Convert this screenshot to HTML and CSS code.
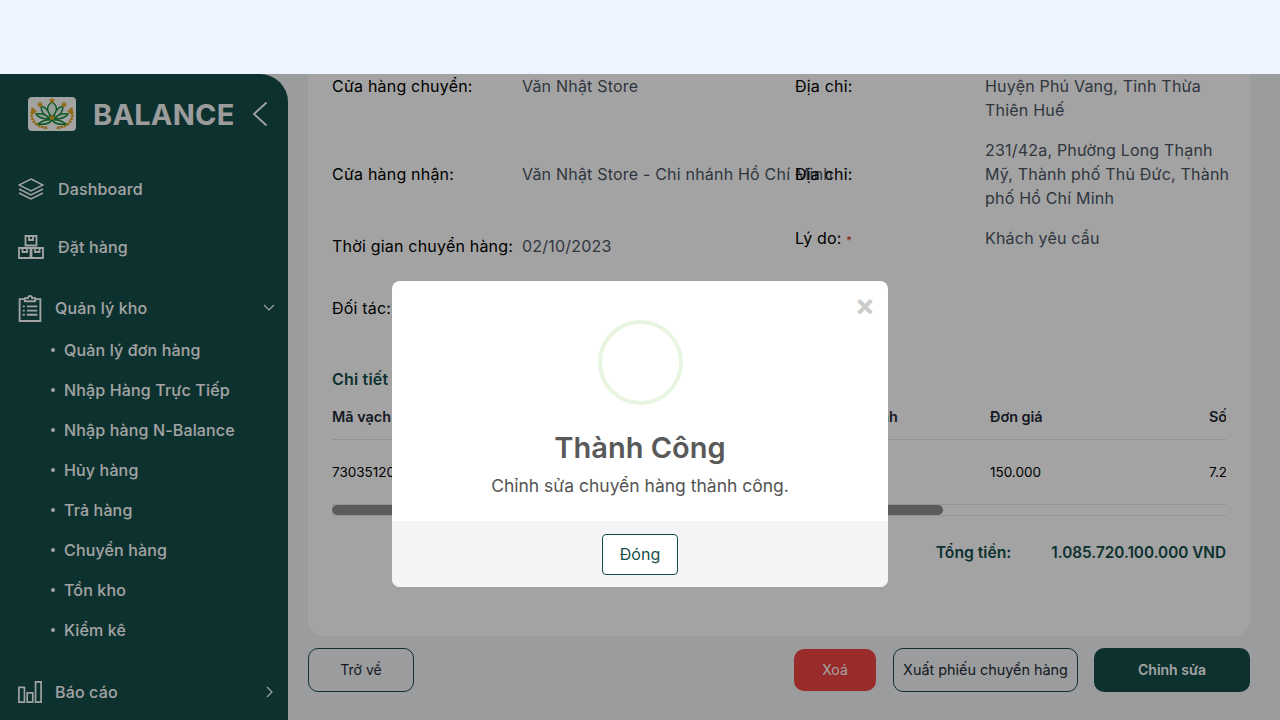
FILE: index.html
```html
<!DOCTYPE html>
<html lang="vi">
<head>
<meta charset="utf-8">
<title>Chuyển hàng</title>
<link rel="stylesheet" href="styles.css">
</head>
<body>
<header class="topbar"></header>
<div class="shell">
  <aside class="sidebar">
    <div class="brand">
      <svg class="logo" viewBox="0 0 48 34">
        <rect width="48" height="34" rx="4" fill="#fff"/>
        <g fill="none" stroke="#d9a01e" stroke-width="2.600" stroke-dasharray="2.500 .8">
          <path d="M5 11C1 21 6 30 20 31"/><path d="M43 11C47 21 42 30 28 31"/>
        </g>
        <g fill="#e9f5ec" stroke="#128a3c" stroke-width="1.500" stroke-linejoin="round">
          <path d="M24 20C18 15 18 9 24 5 30 9 30 15 24 20Z"/>
          <path d="M22 21C16 19 13 14 13 9 18 10 22 15 22 21Z"/>
          <path d="M26 21C32 19 35 14 35 9 30 10 26 15 26 21Z"/>
          <path d="M21 22C15 22 10 20 8 17 14 16 19 18 21 22Z"/>
          <path d="M27 22C33 22 38 20 40 17 34 16 29 18 27 22Z"/>
          <path d="M24 23C19 22 14 24 10 27 16 28 21 27 24 23Z"/>
          <path d="M24 23C29 22 34 24 38 27 32 28 27 27 24 23Z"/>
        </g>
        <g fill="#e2a61f">
          <polygon points="24,0 25,2.400 27.500,2.600 25.600,4.200 26.200,6.600 24,5.300 21.800,6.600 22.400,4.200 20.500,2.600 23,2.400"/>
          <polygon points="12,4 13,6.400 15.500,6.600 13.600,8.200 14.200,10.600 12,9.300 9.800,10.600 10.400,8.200 8.500,6.600 11,6.400"/>
          <polygon points="36,4 37,6.400 39.500,6.600 37.600,8.200 38.200,10.600 36,9.300 33.800,10.600 34.400,8.200 32.500,6.600 35,6.400"/>
          <polygon points="6,11 7,13.400 9.500,13.600 7.600,15.200 8.200,17.600 6,16.300 3.800,17.600 4.400,15.200 2.500,13.600 5,13.400"/>
          <polygon points="42,11 43,13.400 45.500,13.600 43.600,15.200 44.200,17.600 42,16.300 39.800,17.600 40.400,15.200 38.500,13.600 41,13.400"/>
          <polygon points="24,17 25,19.400 27.500,19.600 25.600,21.200 26.200,23.600 24,22.300 21.800,23.600 22.400,21.200 20.500,19.600 23,19.400"/>
        </g>
      </svg>
      <span class="brand-name">BALANCE</span>
      <svg class="brand-back" viewBox="0 0 16 26"><path d="M14.500 1.500 2 13l12.500 11.500"/></svg>
    </div>
    <nav class="nav">
      <a class="nav-item top-item">
        <svg class="nav-icon" viewBox="0 0 26 22"><path d="M13 1 25 7 13 13 1 7Z"/><path d="M1 11l12 6 12-6"/><path d="M1 15l12 6 12-6"/></svg>
        <span>Dashboard</span>
      </a>
      <a class="nav-item top-item">
        <svg class="nav-icon thick" viewBox="0 0 26 24"><path d="M7.500 1h11v9.500h-11zM1 13h11.500v10H1zM13.500 13H25v10H13.500z"/><path d="M11 1v4h4V1M4.500 13v4h4.500v-4M17 13v4h4.500v-4"/></svg>
        <span>Đặt hàng</span>
      </a>
      <a class="nav-item group-item">
        <svg class="nav-icon clip thick" viewBox="0 0 22 26"><path d="M6 4H1v21h20V4h-5"/><path d="M6 6V3h3a2 2 0 0 1 4 0h3v3z"/><path d="M4 11h2M8 11h10M4 15h2M8 15h10M4 19h2M8 19h10"/></svg>
        <span>Quản lý kho</span>
        <svg class="caret" viewBox="0 0 12 8"><path d="M1 1l5 5 5-5"/></svg>
      </a>
      <ul class="sub">
        <li>Quản lý đơn hàng</li>
        <li>Nhập Hàng Trực Tiếp</li>
        <li>Nhập hàng N-Balance</li>
        <li>Hủy hàng</li>
        <li>Trả hàng</li>
        <li>Chuyển hàng</li>
        <li>Tồn kho</li>
        <li>Kiểm kê</li>
      </ul>
      <a class="nav-item group-item report">
        <svg class="nav-icon bars thick" viewBox="0 0 26 24"><path d="M1 7h6v16H1zM10 13h6v10h-6zM19 1h6v22h-6z"/></svg>
        <span>Báo cáo</span>
        <svg class="caret right" viewBox="0 0 8 12"><path d="M1 1l5 5-5 5"/></svg>
      </a>
    </nav>
  </aside>
  <main class="content">
    <section class="card">
      <div class="fields">
        <div class="field top"><span class="label">Cửa hàng chuyển:</span><span class="value">Văn Nhật Store</span></div>
        <div class="field top"><span class="label">Địa chỉ:</span><span class="value wrap">Huyện Phú Vang, Tỉnh Thừa Thiên Huế</span></div>
        <div class="field mid"><span class="label">Cửa hàng nhận:</span><span class="value">Văn Nhật Store - Chi nhánh Hồ Chí Minh</span></div>
        <div class="field mid"><span class="label">Địa chỉ:</span><span class="value wrap">231/42a, Phường Long Thạnh Mỹ, Thành phố Thủ Đức, Thành phố Hồ Chí Minh</span></div>
        <div class="field mid"><span class="label">Thời gian chuyển hàng:</span><span class="value">02/10/2023</span></div>
        <div class="field top"><span class="label">Lý do: <em class="req">*</em></span><span class="value">Khách yêu cầu</span></div>
        <div class="field mid"><span class="label">Đối tác:</span><span class="value"></span></div>
      </div>
      <h3 class="section-title">Chi tiết đơn hàng</h3>
      <div class="table">
        <div class="row head">
          <span class="c-code">Mã vạch</span><span class="c-name">Tên sản phẩm</span><span class="c-unit">Đơn vị tính</span><span class="c-price">Đơn giá</span><span class="c-qty">Số lượng</span>
        </div>
        <div class="row body">
          <span class="c-code">7303512000</span><span class="c-name">Sản phẩm</span><span class="c-unit">Hộp</span><span class="c-price">150.000</span><span class="c-qty">7.238.134</span>
        </div>
        <div class="scrollbar"><div class="thumb"></div></div>
      </div>
      <div class="total"><span class="total-label">Tổng tiền:</span><span class="total-value">1.085.720.100.000 VND</span></div>
    </section>
    <div class="actions">
      <button class="btn outline back">Trở về</button>
      <button class="btn danger">Xoá</button>
      <button class="btn outline export">Xuất phiếu chuyển hàng</button>
      <button class="btn primary">Chỉnh sửa</button>
    </div>
  </main>
  <div class="overlay">
    <div class="modal">
      <button class="close">×</button>
      <div class="modal-body">
        <div class="ring"></div>
        <h2 class="modal-title">Thành Công</h2>
        <p class="modal-text">Chỉnh sửa chuyển hàng thành công.</p>
      </div>
      <div class="modal-foot"><button class="ok">Đóng</button></div>
    </div>
  </div>
</div>
</body>
</html>
```
FILE: styles.css
```css
* { box-sizing: border-box; }
html, body { margin: 0; height: 720px; overflow: hidden; }
body { font-family: Inter, "Noto Sans", sans-serif; background: #edf4ff; display: flex; flex-direction: column; }
.topbar { height: 74px; flex: none; background: #edf4ff; }
.shell { position: relative; flex: 1; display: flex; min-height: 0; overflow: hidden; background: #f3f4f6; }

.sidebar { width: 288px; flex: none; background: #134e4a; border-top-right-radius: 28px; color: #fff; }
.brand { height: 80px; display: flex; align-items: center; padding-left: 28px; }
.logo { width: 48px; height: 34px; flex: none; }
.brand-name { font-size: 29px; font-weight: 700; margin-left: 17px; letter-spacing: .2px; color: #f4f4f4; width: 143px; }
.brand-back { width: 16px; height: 26px; fill: none; stroke: #fff; stroke-width: 1.800; margin-left: 16px; }
.nav { display: flex; flex-direction: column; margin-top: 6px; }
.nav-item { display: flex; align-items: center; padding-left: 18px; font-size: 16px; font-weight: 500; letter-spacing: .15px; }
.top-item { height: 58px; gap: 14px; }
.group-item { height: 44px; margin-top: 10px; gap: 13px; padding-right: 13px; }
.report { margin-top: 20px; }
.nav-icon { width: 26px; height: 24px; flex: none; fill: none; stroke: #fff; stroke-width: 1.500; }
.nav-icon.thick { stroke-width: 1.800; }
.nav-icon.clip { width: 24px; height: 27px; }
.nav-icon.bars { width: 24px; }
.caret { width: 12px; height: 8px; margin-left: auto; fill: none; stroke: #fff; stroke-width: 1.200; }
.caret.right { width: 8px; height: 12px; margin-right: 1px; }
.sub { list-style: none; margin: 0; padding: 0 0 0 51px; font-size: 16px; font-weight: 500; letter-spacing: .15px; }
.sub li { height: 40px; display: flex; align-items: center; gap: 8px; }
.sub li::before { content: ""; width: 4px; height: 4px; border-radius: 50%; background: #fff; flex: none; margin-right: 1px; }

.content { flex: 1; min-width: 0; padding: 0 30px 0 20px; display: flex; flex-direction: column; gap: 12px; }
.card { height: 562px; flex: none; background: #fff; border-radius: 0 0 16px 16px; padding: 0 24px; }
.fields { display: grid; grid-template-columns: 463px 1fr; grid-template-rows: 48px 72px 40px 52px; row-gap: 16px; }
.field { display: flex; align-items: center; min-width: 0; font-size: 16px; letter-spacing: .2px; line-height: 24px; }
.field.top { align-items: flex-start; }
.label { width: 190px; flex: none; color: #000; }
.value { color: #4b5563; white-space: nowrap; }
.value.wrap { white-space: normal; width: 250px; flex: none; }
.req { color: #dc2626; font-style: normal; font-size: 11px; }
.section-title { margin: 33px 0 0; font-size: 16px; letter-spacing: .2px; line-height: 24px; font-weight: 600; color: #134e4a; }
.table { margin-top: 2px; overflow: hidden; }
.row { display: flex; align-items: center; white-space: nowrap; }
.row.head { height: 47px; font-size: 14.400px; font-weight: 600; color: #1f2937; border-bottom: 1px solid #e5e7eb; }
.row.body { height: 64px; font-size: 13.500px; color: #000; }
.c-code { width: 240px; flex: none; }
.c-name { width: 252px; flex: none; }
.c-unit { width: 166px; flex: none; }
.c-price { width: 219px; flex: none; }
.scrollbar { height: 12px; border-top: 1px solid #e5e7eb; border-bottom: 1px solid #e5e7eb; }
.thumb { width: 611px; height: 10px; border-radius: 5px; background: #8f8f8f; }
.total { display: flex; justify-content: flex-end; align-items: center; margin-top: 24px; height: 24px; font-weight: 600; color: #134e4a; }
.total-label { font-size: 15.700px; }
.total-value { margin-left: 40px; font-size: 15.300px; }

.actions { display: flex; align-items: center; height: 44px; }
.btn { height: 44px; border-radius: 10px; font: inherit; font-size: 14px; padding: 0 0 1px; background: none; }
.outline { border: 1px solid #134e4a; color: #1f2937; }
.back { width: 106px; margin-right: auto; }
.danger { width: 82px; height: 42px; border: 0; background: #ef4444; color: #fff; margin-right: 17px; }
.export { width: 185px; margin-right: 16px; font-size: 14.400px; }
.primary { width: 156px; border: 0; background: #134e4a; color: #fff; font-weight: 600; }

.overlay { position: absolute; inset: 0; background: rgba(0,0,0,.36); display: flex; justify-content: center; align-items: flex-start; padding-top: 207px; }
.modal { position: relative; width: 496px; height: 306px; background: #fff; border-radius: 8px; display: flex; flex-direction: column; overflow: hidden; }
.close { position: absolute; top: 9px; right: 8px; width: 30px; height: 30px; border: 0; background: none; color: #ccc; font: 700 30px/30px Inter, sans-serif; padding: 0; }
.modal-body { height: 240px; display: flex; flex-direction: column; align-items: center; padding-top: 39px; }
.ring { width: 85px; height: 85px; border-radius: 50%; border: 4px solid #e8f5e0; flex: none; }
.modal-title { margin: 24px 0 0; font-size: 29px; line-height: 38px; font-weight: 600; color: #595959; }
.modal-text { margin: 7px 0 0; font-size: 17.500px; line-height: 24px; color: #545454; }
.modal-foot { flex: 1; background: #f3f4f6; display: flex; align-items: center; justify-content: center; }
.ok { width: 76px; height: 41px; background: #fff; border: 1px solid #134e4a; border-radius: 4px; color: #134e4a; font: inherit; font-size: 16px; padding: 0; }
```
